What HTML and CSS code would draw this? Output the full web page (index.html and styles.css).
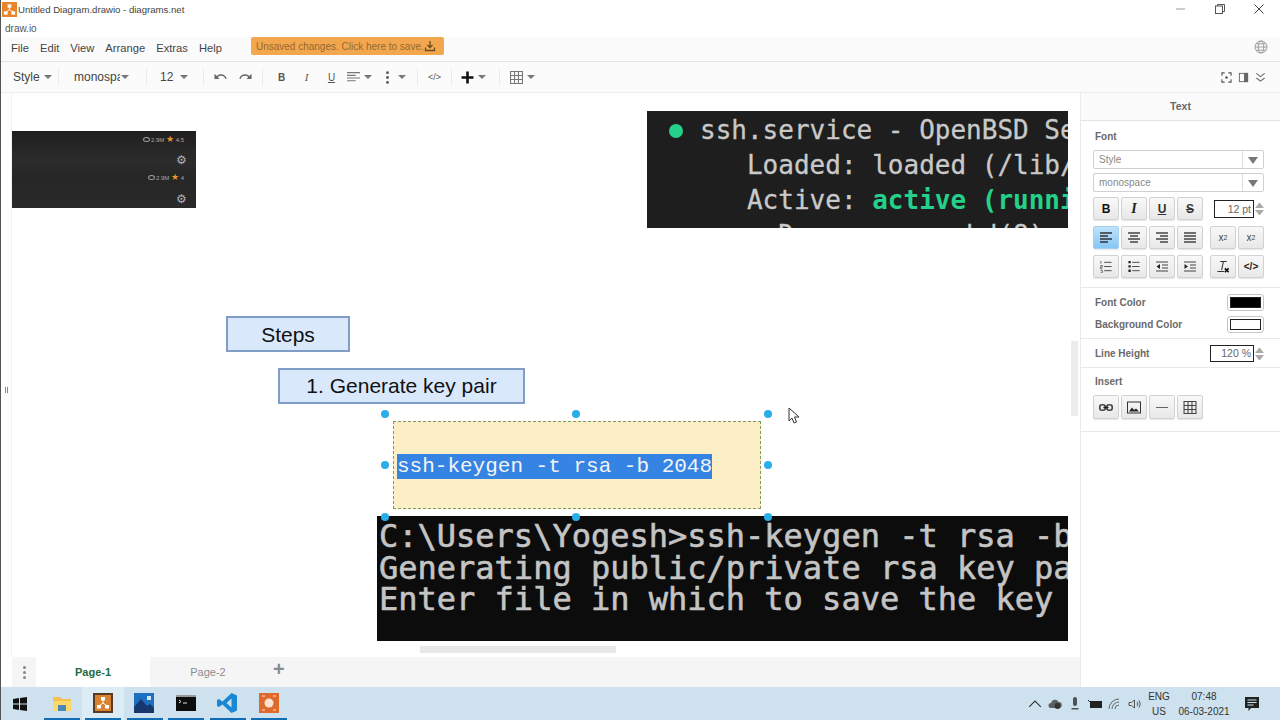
FILE: index.html
```html
<!DOCTYPE html>
<html lang="en">
  <head>
    <meta charset="UTF-8">
    <title>Untitled Diagram.drawio - diagrams.net</title>
    <link rel="stylesheet" href="styles.css">
  </head>
  <body>
    <div class="app">
      <div class="titlebar">
        <svg class="app-icon" viewBox="0 0 16 16">
          <rect width="16" height="16" fill="#e8852c"/>
          <path d="M8 5v3M8 8l-4 3M8 8l4 3" stroke="#fff" stroke-width="1"/>
          <rect x="6" y="2.5" width="4" height="3.5" fill="#fff"/>
          <rect x="2" y="10" width="4" height="3.5" fill="#fff"/>
          <rect x="10" y="10" width="4" height="3.5" fill="#fff"/>
        </svg>
        <span class="title-text">Untitled Diagram.drawio - diagrams.net</span>
        <div class="win-btns">
          <svg viewBox="0 0 12 12"><path d="M1 6h9" stroke="#999" stroke-width="1"/></svg>
          <svg viewBox="0 0 12 12" fill="none" stroke="#555"><rect x="1.5" y="3" width="7" height="7.5"/><path d="M3.5 3V1.5h7v7H8.500"/></svg>
          <svg viewBox="0 0 12 12" stroke="#444"><path d="M1.500 1.500l9 9M10.500 1.500l-9 9"/></svg>
        </div>
      </div>
      <div class="brand">draw.io</div>

      <div class="menubar">
        <span class="menu-item">File</span>
        <span class="menu-item">Edit</span>
        <span class="menu-item">View</span>
        <span class="menu-item">Arrange</span>
        <span class="menu-item">Extras</span>
        <span class="menu-item">Help</span>
        <div class="save-btn">
          <span>Unsaved changes. Click here to save.</span>
          <svg viewBox="0 0 12 12" fill="none" stroke="#6b4a1c" stroke-width="1.300"><path d="M6 1v6M3.500 5L6 7.500 8.500 5M1.500 7.500v3h9v-3"/></svg>
        </div>
        <svg class="globe" viewBox="0 0 14 14" fill="none" stroke="#8a8a8a" stroke-width=".8"><circle cx="7" cy="7" r="6"/><ellipse cx="7" cy="7" rx="2.800" ry="6"/><path d="M1 7h12M2 3.800h10M2 10.200h10"/></svg>
      </div>

      <div class="toolbar">
        <div class="tb-label tb-style">Style<i class="caret"></i></div>
        <i class="tb-sep"></i>
        <div class="tb-label tb-font"><span class="clip">monospa</span><i class="caret caret-tight"></i></div>
        <i class="tb-sep"></i>
        <div class="tb-label tb-size">12<i class="caret caret-wide"></i></div>
        <i class="tb-sep"></i>
        <button class="tb-btn"><svg viewBox="0 0 14 14"><path d="M.5 3v5.500H6L4 6.600C5 5.700 6.300 5.200 7.800 5.200c2 0 3.700 1.200 4.400 3.300l1.500-.5C12.800 5.300 10.500 3.500 7.800 3.500c-1.900 0-3.600.7-4.900 1.900z" fill="#666"/></svg></button>
        <button class="tb-btn"><svg viewBox="0 0 14 14"><path d="M13.500 3v5.500H8l2-1.900C9 5.700 7.700 5.200 6.200 5.200c-2 0-3.700 1.200-4.400 3.300L.3 8c.9-2.700 3.200-4.500 5.900-4.500 1.900 0 3.600.7 4.900 1.900z" fill="#666"/></svg></button>
        <i class="tb-sep"></i>
        <button class="tb-btn tb-b">B</button>
        <button class="tb-btn tb-i">I</button>
        <button class="tb-btn tb-u">U</button>
        <button class="tb-btn tb-menu tb-align"><svg viewBox="0 0 12 12" stroke="#777"><path d="M0 1.500h12M0 4h8M0 6.500h12M0 9h8"/></svg><i class="caret"></i></button>
        <button class="tb-btn tb-menu"><svg viewBox="0 0 12 12" fill="#555"><circle cx="6" cy="1.500" r="1.300"/><circle cx="6" cy="6" r="1.300"/><circle cx="6" cy="10.500" r="1.300"/></svg><i class="caret"></i></button>
        <i class="tb-sep tb-sep-close"></i>
        <button class="tb-btn tb-code">&lt;/&gt;</button>
        <i class="tb-sep"></i>
        <button class="tb-btn tb-menu tb-plus"><svg viewBox="0 0 12 12"><path d="M6 .5v11M.5 6h11" stroke="#111" stroke-width="2.400"/></svg><i class="caret"></i></button>
        <i class="tb-sep"></i>
        <button class="tb-btn tb-menu tb-table"><svg viewBox="0 0 12 12" fill="none" stroke="#777"><path d="M.5.500h11v11H.5zM4.200.500v11M7.800.500v11M.5 4.200h11M.5 7.800h11"/></svg><i class="caret"></i></button>
        <div class="tb-right">
          <svg viewBox="0 0 12 12" fill="none" stroke="#555" stroke-width="1.200"><path d="M1 4V1h3M8 1h3v3M11 8v3H8M4 11H1V8"/><circle cx="6" cy="6" r="1.400" fill="#555" stroke="none"/></svg>
          <svg viewBox="0 0 12 12" fill="none" stroke="#666"><rect x="1.500" y="1.500" width="9" height="9"/><rect x="7" y="1.500" width="3.500" height="9" fill="#666"/></svg>
          <svg viewBox="0 0 12 12" fill="none" stroke="#666" stroke-width="1.200"><path d="M1.500 1.500L6 5l4.500-3.500M1.500 6.500L6 10l4.500-3.500"/></svg>
        </div>
      </div>

      <div class="main">
        <div class="work">
          <div class="work-top">
            <div class="left-rail"><span class="rail-grip"></span></div>
            <div class="canvas">
              <div class="thumb">
                <div class="thumb-row thumb-row-a"><span class="eye"></span>2.9M <b>★</b> 4.5</div>
                <div class="thumb-gear thumb-gear-a">⚙</div>
                <div class="thumb-row thumb-row-b"><span class="eye"></span>2.9M <b>★</b> 4</div>
                <div class="thumb-gear thumb-gear-b">⚙</div>
              </div>

              <div class="shot-service">
                <i class="dot-ok"></i>
                <pre class="service-text">ssh.service - OpenBSD Se
   Loaded: loaded (/lib/
   Active: <b>active (runni</b>
     Docs: man:sshd(8)</pre>
              </div>

              <div class="node node-steps">Steps</div>
              <div class="node node-gen">1. Generate key pair</div>
              <div class="node-edit"><span class="sel-text">ssh-keygen -t rsa -b 2048</span></div>

              <div class="shot-term">
                <pre class="term-text">C:\Users\Yogesh&gt;ssh-keygen -t rsa -b
Generating public/private rsa key pa
Enter file in which to save the key</pre>
              </div>

              <i class="handle h-tl"></i><i class="handle h-tc"></i><i class="handle h-tr"></i>
              <i class="handle h-ml"></i><i class="handle h-mr"></i>
              <i class="handle h-bl"></i><i class="handle h-bc"></i><i class="handle h-br"></i>

              <svg class="pointer" viewBox="0 0 12 18"><path d="M1 1v13l3-3 2 5 2.500-1-2-5h4.500z" fill="#fff" stroke="#333" stroke-width="1"/></svg>
              <i class="scroll-v"></i>
              <i class="scroll-h"></i>
            </div>
          </div>
          <div class="pagebar">
            <div class="page-menu"><i></i><i></i><i></i></div>
            <div class="page-tab active">Page-1</div>
            <div class="page-tab page-tab-next">Page-2</div>
            <div class="page-add">+</div>
          </div>
        </div>

        <aside class="panel">
          <div class="panel-head">Text</div>

          <section class="sec sec-font">
            <div class="sec-title">Font</div>
            <div class="select">Style<span class="select-arrow"></span></div>
            <div class="select">monospace<span class="select-arrow"></span></div>
            <div class="btn-row">
              <div class="btn-group">
                <button class="pbtn pbtn-b">B</button>
                <button class="pbtn pbtn-i">I</button>
                <button class="pbtn pbtn-u">U</button>
                <button class="pbtn pbtn-s">S</button>
              </div>
              <div class="stepper stepper-size"><span class="num">12 pt</span><span class="spin"><i></i><i></i></span></div>
            </div>
            <div class="btn-row">
              <div class="btn-group">
                <button class="pbtn on"><svg viewBox="0 0 14 12" stroke="#333" stroke-width="1.400"><path d="M1 1.500h12M1 4.500h8M1 7.500h12M1 10.500h8"/></svg></button>
                <button class="pbtn"><svg viewBox="0 0 14 12" stroke="#444" stroke-width="1.400"><path d="M1 1.500h12M3 4.500h8M1 7.500h12M3 10.500h8"/></svg></button>
                <button class="pbtn"><svg viewBox="0 0 14 12" stroke="#444" stroke-width="1.400"><path d="M1 1.500h12M5 4.500h8M1 7.500h12M5 10.500h8"/></svg></button>
                <button class="pbtn"><svg viewBox="0 0 14 12" stroke="#444" stroke-width="1.400"><path d="M1 1.500h12M1 4.500h12M1 7.500h12M1 10.500h12"/></svg></button>
              </div>
              <div class="btn-group">
                <button class="pbtn pbtn-script">x<sub>2</sub></button>
                <button class="pbtn pbtn-script">x<sup>2</sup></button>
              </div>
            </div>
            <div class="btn-row">
              <div class="btn-group">
                <button class="pbtn"><svg viewBox="0 0 14 14" stroke="#444"><path d="M5 2.500h8M5 7h8M5 11.500h8"/><path d="M1.500 1v3M1 6h2v1.500H1V9h2M1 11h2v3H1" fill="none" stroke-width=".8"/></svg></button>
                <button class="pbtn"><svg viewBox="0 0 14 14" stroke="#444"><path d="M5 2.500h8M5 7h8M5 11.500h8"/><path d="M1 1h2.500v2.500H1zM1 5.700h2.500v2.500H1zM1 10.300h2.500v2.500H1z" fill="#222" stroke="none"/></svg></button>
                <button class="pbtn"><svg viewBox="0 0 14 12" stroke="#444" stroke-width="1.200"><path d="M1 1.500h12M7 4.500h6M7 7.500h6M1 10.500h12"/><path d="M5 3.500v5L1.500 6z" fill="#222" stroke="none"/></svg></button>
                <button class="pbtn"><svg viewBox="0 0 14 12" stroke="#444" stroke-width="1.200"><path d="M1 1.500h12M7 4.500h6M7 7.500h6M1 10.500h12"/><path d="M1.500 3.500v5L5 6z" fill="#222" stroke="none"/></svg></button>
              </div>
              <div class="btn-group">
                <button class="pbtn"><svg viewBox="0 0 14 14" fill="none" stroke="#333"><path d="M4 1.500h7M7.500 1.500L5.500 11M1 12.500h7" stroke-width="1.100"/><path d="M9 9l4 4M13 9l-4 4" stroke="#111" stroke-width="1.800"/></svg></button>
                <button class="pbtn pbtn-code">&lt;/&gt;</button>
              </div>
            </div>
          </section>

          <section class="sec sec-color">
            <div class="color-row"><span class="sec-title">Font Color</span><span class="swatch"><i class="swatch-black"></i></span></div>
            <div class="color-row"><span class="sec-title">Background Color</span><span class="swatch"><i></i></span></div>
          </section>

          <section class="sec sec-line">
            <span class="sec-title">Line Height</span>
            <div class="stepper stepper-line"><span class="num">120 %</span><span class="spin"><i></i><i></i></span></div>
          </section>

          <section class="sec sec-insert">
            <div class="sec-title">Insert</div>
            <div class="btn-group">
              <button class="pbtn"><svg viewBox="0 0 16 10" fill="none" stroke="#222" stroke-width="1.600"><rect x="1" y="2" width="6" height="6" rx="1.500"/><rect x="9" y="2" width="6" height="6" rx="1.500"/><path d="M5 5h6"/></svg></button>
              <button class="pbtn"><svg viewBox="0 0 14 12"><rect x=".5" y=".5" width="13" height="11" fill="none" stroke="#333"/><path d="M2 10l3-4 2 2.500 2-1.500 3 3z" fill="#222"/></svg></button>
              <button class="pbtn"><svg viewBox="0 0 14 12"><path d="M1 6h12" stroke="#666"/></svg></button>
              <button class="pbtn"><svg viewBox="0 0 12 12" fill="none" stroke="#444"><path d="M.5.500h11v11H.5zM4.200.500v11M7.800.500v11M.5 4.200h11M.5 7.800h11"/></svg></button>
            </div>
          </section>
        </aside>
      </div>

      <div class="taskbar">
        <div class="task-start"><svg viewBox="0 0 14 14" fill="#111"><path d="M0 2l6-.9V6.500H0zM7 1l7-1v6.500H7zM0 7.500h6V13l-6-.9zM7 7.500h7V14l-7-1z"/></svg></div>
        <div class="task-app open"><svg viewBox="0 0 20 18"><path d="M1 3h7l2 2h9v4H1z" fill="#f2c14e"/><rect x="1" y="7" width="18" height="10" fill="#fbd968"/><rect x="6" y="11" width="8" height="6" fill="#4a86b8"/></svg></div>
        <div class="task-app open current"><svg viewBox="0 0 20 20"><rect width="20" height="20" fill="#5a3a22"/><rect x="2" y="2" width="16" height="16" fill="#d9822f"/><path d="M10 7v3M10 10l-4 3M10 10l4 3" stroke="#fff"/><rect x="8" y="4" width="4" height="3.500" fill="#fff"/><rect x="4" y="12" width="4" height="3.500" fill="#fff"/><rect x="12" y="12" width="4" height="3.500" fill="#fff"/></svg></div>
        <div class="task-app open"><svg viewBox="0 0 20 20"><rect width="20" height="20" fill="#1f6fc0"/><path d="M0 20V14L7 6l6 7 3-2 4 4v5z" fill="#17386e"/><rect x="13" y="3" width="4" height="4" fill="#cfe6fa"/></svg></div>
        <div class="task-app open"><svg viewBox="0 0 20 16"><rect width="20" height="16" fill="#0c0c0c"/><rect y="0" width="20" height="2" fill="#9a9a9a"/><path d="M3 5l2 1.500L3 8" stroke="#ddd" fill="none"/><path d="M7 8h4" stroke="#ddd"/></svg></div>
        <div class="task-app open"><svg viewBox="0 0 20 20"><path d="M14.500 0L20 2.500v15L14.500 20 5.500 11.500 2 14 0 13V7l2-1 3.500 2.500zM14.500 5.500L9.500 10l5 4.500z" fill="#1a87d6"/></svg></div>
        <div class="task-app open"><svg viewBox="0 0 20 20"><rect width="20" height="20" fill="#e0692c"/><circle cx="10" cy="10" r="4.500" fill="#fbe3d3"/><path d="M3 3h3M14 3h3M3 17h3M14 17h3" stroke="#fbe3d3"/></svg></div>
        <div class="tray">
          <svg class="tray-icon" viewBox="0 0 12 12" fill="none" stroke="#333"><path d="M1 8.500L6 3.500l5 5"/></svg>
          <svg class="tray-icon" viewBox="0 0 14 12"><path d="M3 10a2.500 2.500 0 0 1 0-5 4 4 0 0 1 7.500-1A3 3 0 0 1 11 10z" fill="#5a5f63"/><circle cx="9.500" cy="8" r="3" fill="#333"/></svg>
          <svg class="tray-icon" viewBox="0 0 12 14"><rect x="4" y="0" width="4" height="9" rx="2" fill="#4d5257"/><path d="M2.500 11h7v1.500h-7z" fill="#4d5257"/></svg>
          <svg class="tray-icon" viewBox="0 0 14 10"><rect x="2" y="2" width="12" height="7" fill="#222"/><path d="M0 1l2 2" stroke="#222"/></svg>
          <svg class="tray-icon" viewBox="0 0 14 12" fill="none" stroke="#666"><path d="M1 11a10 10 0 0 1 10-10M4 11a7 7 0 0 1 7-7M7 11a4 4 0 0 1 4-4"/></svg>
          <svg class="tray-icon" viewBox="0 0 14 12" fill="none" stroke="#555"><path d="M1 4.500h2.500L6.500 2v8L3.500 7.500H1zM9 4a3 3 0 0 1 0 4M11 2.500a6 6 0 0 1 0 7"/></svg>
          <div class="tray-lang"><span>ENG</span><span>US</span></div>
          <div class="tray-clock"><span>07:48</span><span>06-03-2021</span></div>
          <svg class="tray-note" viewBox="0 0 14 14"><path d="M0 0h14v11H6l-2.500 3V11H0z" fill="#222"/><path d="M2.500 3h9M2.500 5.500h9M2.500 8h6" stroke="#cfe3ee"/></svg>
        </div>
      </div>
    </div>
  </body>
</html>
```

FILE: styles.css
```css
* {
  margin: 0;
  padding: 0;
  box-sizing: border-box;
}

html, body {
  width: 1280px;
  height: 720px;
  overflow: hidden;
}

body {
  background: #fff;
  font-family: "Liberation Sans", Arial, sans-serif;
  color: #333;
}

button {
  border: 0;
  background: none;
  font-family: inherit;
  color: inherit;
}

.app {
  width: 1280px;
  height: 720px;
  display: flex;
  flex-direction: column;
  border-left: 1px solid #555;
}

/* window chrome */
.titlebar {
  height: 18px;
  flex: none;
  display: flex;
  align-items: center;
  padding-left: 1px;
}

.app-icon {
  width: 15px;
  height: 15px;
  margin-right: 1px;
}

.title-text {
  font-size: 9.600px;
  color: #444;
}

.win-btns {
  margin-left: auto;
  display: flex;
  gap: 27px;
  padding-right: 15px;
}

.win-btns svg {
  width: 12px;
  height: 12px;
}

.brand {
  height: 19px;
  flex: none;
  font-size: 10px;
  line-height: 21px;
  padding-left: 4px;
  color: #555;
}

.menubar {
  height: 25px;
  flex: none;
  display: flex;
  align-items: flex-start;
  background: #fbfbfb;
  border-bottom: 1px solid #e4e4e4;
  padding-left: 10px;
}

.menu-item {
  font-size: 11.200px;
  line-height: 22px;
  color: #444;
  margin-right: 11px;
}

.save-btn {
  display: flex;
  align-items: center;
  justify-content: space-between;
  height: 18px;
  margin-left: 18px;
  padding: 0 9px 0 5px;
  width: 193px;
  background: #f2a74f;
  border-radius: 2px;
  font-size: 10px;
  color: #95682f;
  white-space: nowrap;
}

.save-btn svg {
  width: 12px;
  height: 12px;
  flex: none;
}

.globe {
  width: 14px;
  height: 14px;
  margin: 3px 12px 0 auto;
}

.toolbar {
  height: 31px;
  flex: none;
  display: flex;
  align-items: center;
  background: #fbfbfb;
  border-bottom: 1px solid #ececec;
  padding-left: 12px;
}

.tb-label {
  display: flex;
  align-items: center;
  flex: none;
  font-size: 12px;
  color: #444;
  white-space: nowrap;
}

.tb-style {
  width: 41px;
}

.tb-font {
  width: 68px;
  margin-left: 11px;
}

.tb-size {
  width: 39px;
  margin-left: 9px;
}

.clip {
  display: block;
  width: 46px;
  overflow: hidden;
}

.caret {
  display: inline-block;
  flex: none;
  width: 0;
  height: 0;
  margin-left: 4px;
  border: 4px solid transparent;
  border-top-color: #777;
  border-bottom: 0;
}

.caret-tight {
  margin-left: 1px;
}

.caret-wide {
  margin-left: 7px;
}

.tb-sep {
  width: 1px;
  height: 18px;
  margin: 0 4px;
  background: #ececec;
  flex: none;
}

.tb-sep-close {
  margin-left: 2px;
}

.tb-btn {
  width: 25px;
  height: 22px;
  flex: none;
  display: flex;
  align-items: center;
  justify-content: center;
}

.tb-btn svg {
  width: 13px;
  height: 13px;
  flex: none;
}

.tb-menu {
  width: 34px;
  justify-content: flex-start;
}

.tb-align {
  margin-left: 3px;
}

.tb-plus {
  margin-left: 5px;
}

.tb-table {
  margin-left: 6px;
}

.tb-b {
  margin-left: 2px;
  font-size: 10px;
  font-weight: bold;
  color: #555;
}

.tb-i {
  font-size: 11px;
  font-style: italic;
  font-family: "Liberation Serif", serif;
  color: #555;
}

.tb-u {
  font-size: 10px;
  color: #555;
  text-decoration: underline;
}

.tb-code {
  font-size: 9px;
  color: #555;
}

.tb-right {
  margin-left: auto;
  display: flex;
  align-items: center;
  gap: 6px;
  padding-right: 14px;
}

.tb-right svg {
  width: 11px;
  height: 11px;
}

/* main area */
.main {
  flex: 1;
  min-height: 0;
  display: flex;
}

.work {
  width: 1079px;
  display: flex;
  flex-direction: column;
}

.work-top {
  flex: 1;
  min-height: 0;
  display: flex;
}

.left-rail {
  width: 11px;
  flex: none;
  display: flex;
  align-items: center;
  justify-content: center;
  background: #fff;
  border-right: 1px solid #f2f2f2;
}

.rail-grip {
  width: 3px;
  height: 6px;
  border-left: 1px solid #888;
  border-right: 1px solid #888;
  margin-top: 30px;
}

.canvas {
  flex: 1;
  position: relative;
  overflow: hidden;
  background: #fff;
}

/* canvas coordinates: x - 12, y - 93 */
.thumb {
  position: absolute;
  left: 0;
  top: 38px;
  width: 184px;
  height: 77px;
  background: linear-gradient(#1f1f1f, #2c2c2c 40%, #262626 60%, #2a2a2a);
  color: #a8a8a8;
  font-size: 6px;
}

.thumb-row {
  position: absolute;
  right: 12px;
  white-space: nowrap;
}

.thumb-row b {
  color: #e3962d;
  font-size: 9px;
  line-height: 8px;
  font-weight: normal;
}

.thumb-row-a {
  top: 4px;
}

.thumb-row-b {
  top: 42px;
}

.eye {
  display: inline-block;
  width: 7px;
  height: 5px;
  margin-right: 1px;
  border: 1px solid #9c9c9c;
  border-radius: 50%;
}

.thumb-gear {
  position: absolute;
  right: 9px;
  font-size: 12px;
  line-height: 12px;
  color: #b0b0b0;
}

.thumb-gear-a {
  top: 23px;
}

.thumb-gear-b {
  top: 62px;
}

.shot-service {
  position: absolute;
  left: 635px;
  top: 18px;
  width: 421px;
  height: 117px;
  overflow: hidden;
  background: #1e1e1e;
  color: #c9c9c9;
}

.dot-ok {
  position: absolute;
  left: 22px;
  top: 13px;
  width: 14px;
  height: 14px;
  border-radius: 50%;
  background: #23d18b;
}

.service-text {
  position: absolute;
  left: 53px;
  top: 2px;
  font-family: "DejaVu Sans Mono", monospace;
  font-size: 26px;
  line-height: 35px;
  -webkit-text-stroke: .3px #c9c9c9;
}

.service-text b {
  color: #23d18b;
  -webkit-text-stroke: 0;
}

.node {
  position: absolute;
  display: flex;
  align-items: center;
  justify-content: center;
  background: #dae8fc;
  border: 2px solid #7f9dc8;
  color: #111;
}

.node-steps {
  left: 214px;
  top: 223px;
  width: 124px;
  height: 36px;
  padding-top: 1px;
  font-size: 21px;
}

.node-gen {
  left: 266px;
  top: 275px;
  width: 247px;
  height: 36px;
  font-size: 21px;
}

.node-edit {
  position: absolute;
  left: 381px;
  top: 328px;
  width: 368px;
  height: 88px;
  display: flex;
  align-items: center;
  padding: 3px 0 0 3px;
  background: #fcefc5;
  border: 1px dashed #7f9a63;
}

.sel-text {
  font-family: "Liberation Mono", monospace;
  font-size: 21px;
  line-height: 25px;
  background: #3584e4;
  color: #f4f4f4;
  white-space: pre;
}

.shot-term {
  position: absolute;
  left: 365px;
  top: 423px;
  width: 691px;
  height: 125px;
  overflow: hidden;
  background: #0c0c0c;
}

.term-text {
  padding: 5px 0 0 2px;
  font-family: "DejaVu Sans Mono", monospace;
  font-size: 32px;
  line-height: 31.500px;
  color: #c4c4c4;
  -webkit-text-stroke: .6px #c4c4c4;
}

.handle {
  position: absolute;
  width: 8px;
  height: 8px;
  border-radius: 50%;
  background: #29aeea;
}

.h-tl { left: 369px; top: 317px; }
.h-tc { left: 560px; top: 317px; }
.h-tr { left: 752px; top: 317px; }
.h-ml { left: 369px; top: 368px; }
.h-mr { left: 752px; top: 368px; }
.h-bl { left: 369px; top: 420px; }
.h-bc { left: 560px; top: 420px; }
.h-br { left: 752px; top: 420px; }

.pointer {
  position: absolute;
  left: 776px;
  top: 314px;
  width: 12px;
  height: 18px;
}

.scroll-v {
  position: absolute;
  left: 1059px;
  top: 248px;
  width: 7px;
  height: 75px;
  background: #ececec;
}

.scroll-h {
  position: absolute;
  left: 408px;
  top: 553px;
  width: 196px;
  height: 7px;
  background: #e8e8e8;
}

/* page tabs */
.pagebar {
  height: 30px;
  flex: none;
  display: flex;
  align-items: stretch;
  margin-left: 11px;
  background: #f5f5f5;
  font-size: 11px;
  color: #8c8c8c;
}

.page-menu {
  width: 24px;
  display: flex;
  flex-direction: column;
  align-items: center;
  justify-content: center;
  gap: 2px;
}

.page-menu i {
  width: 3px;
  height: 3px;
  border-radius: 50%;
  background: #888;
}

.page-tab {
  width: 114px;
  line-height: 30px;
  text-align: center;
}

.page-tab-next {
  padding-left: 2px;
}

.page-tab.active {
  background: #fff;
  color: #1d6b40;
  font-weight: bold;
}

.page-add {
  margin-left: 9px;
  font-size: 20px;
  font-weight: bold;
  line-height: 24px;
  color: #8c8c8c;
}

/* right panel */
.panel {
  flex: 1;
  background: #fff;
  border-left: 1px solid #eaeaea;
  font-size: 10px;
  color: #555;
}

.panel-head {
  height: 28px;
  line-height: 26px;
  text-align: center;
  font-weight: bold;
  font-size: 10.500px;
  color: #666;
  background: #fbfbfb;
  border-bottom: 1px solid #e4e4e4;
}

.sec {
  padding: 0 16px 0 12px;
  border-bottom: 1px solid #e9e9e9;
}

.sec-title {
  display: block;
  padding-left: 2px;
  font-size: 10px;
  line-height: 12px;
  font-weight: bold;
  color: #6a6a6a;
}

.sec-font {
  height: 167px;
  padding-top: 10px;
}

.select {
  position: relative;
  height: 19px;
  margin-top: 7px;
  margin-bottom: -1px;
  padding-left: 5px;
  line-height: 17px;
  color: #888;
  background: #fff;
  border: 1px solid #d0d0d0;
  border-radius: 2px;
}

.select + .select {
  margin-top: 5px;
}

.select-arrow {
  position: absolute;
  right: 5px;
  top: 6px;
  border: 5px solid transparent;
  border-top: 7px solid #777;
  border-bottom: 0;
}

.select-arrow::before {
  content: "";
  position: absolute;
  left: -11px;
  top: -13px;
  height: 17px;
  border-left: 1px solid #ddd;
}

.btn-row {
  display: flex;
  justify-content: space-between;
  align-items: center;
  margin-top: 6px;
}

.btn-group {
  display: flex;
  gap: 2px;
}

.pbtn {
  width: 26px;
  height: 23px;
  display: flex;
  align-items: center;
  justify-content: center;
  background: linear-gradient(#f8f8f8, #e8e8e8);
  border: 1px solid #d2d2d2;
  border-radius: 2px;
  box-shadow: 0 1px 1px #e6e6e6;
  font-size: 11px;
}

.pbtn svg {
  width: 14px;
  height: 13px;
}

.pbtn.on {
  background: linear-gradient(#bfe2fb, #86c6f5);
  border-color: #a8cfee;
}

.pbtn-b {
  font-weight: bold;
  font-size: 12px;
  color: #111;
}

.pbtn-i {
  font-style: italic;
  font-weight: bold;
  font-family: "Liberation Serif", serif;
  font-size: 14px;
  color: #222;
}

.pbtn-u {
  font-weight: bold;
  font-size: 12px;
  text-decoration: underline;
  color: #333;
}

.pbtn-s {
  font-weight: bold;
  font-size: 12px;
  text-decoration: line-through;
  color: #333;
}

.pbtn-script {
  font-size: 10px;
  color: #444;
}

.pbtn-script sub, .pbtn-script sup {
  font-size: 7px;
  line-height: 0;
}

.pbtn-code {
  font-size: 10px;
  font-weight: bold;
  color: #222;
}

.stepper {
  display: flex;
  align-items: center;
  gap: 1px;
}

.num {
  display: block;
  height: 18px;
  line-height: 16px;
  padding-right: 2px;
  text-align: right;
  font-size: 10.500px;
  background: #fff;
  border: 1px solid #222;
  color: #666;
}

.stepper-size .num {
  width: 40px;
}

.stepper-line .num {
  width: 44px;
  height: 17px;
  line-height: 15px;
}

.spin {
  display: flex;
  flex-direction: column;
  gap: 2px;
  width: 9px;
}

.spin i {
  border: 4px solid transparent;
  border-top: 0;
  border-bottom: 5px solid #aaa;
}

.spin i + i {
  transform: scaleY(-1);
}

.sec-color {
  height: 51px;
  padding-top: 6px;
}

.color-row {
  display: flex;
  justify-content: space-between;
  align-items: center;
  height: 17px;
  margin-bottom: 5px;
}

.swatch {
  display: block;
  width: 37px;
  height: 17px;
  padding: 2px;
  border: 1px solid #c6c6c6;
  border-radius: 3px;
}

.swatch i {
  display: block;
  height: 100%;
  background: #fff;
  border: 1px solid #222;
}

.swatch .swatch-black {
  background: #000;
}

.sec-line {
  height: 29px;
  padding-top: 1px;
  display: flex;
  align-items: center;
  justify-content: space-between;
}

.sec-insert {
  height: 64px;
  padding-top: 8px;
}

.sec-insert .btn-group {
  margin-top: 7px;
}

.sec-insert .pbtn {
  height: 24px;
}

/* windows taskbar */
.taskbar {
  height: 33px;
  flex: none;
  display: flex;
  background: #cde2ee;
}

.task-start {
  width: 40px;
  display: flex;
  align-items: center;
  justify-content: center;
  padding-right: 2px;
}

.task-start svg {
  width: 14px;
  height: 14px;
}

.task-app {
  width: 41.400px;
  display: flex;
  align-items: center;
  justify-content: center;
  border-bottom: 2px solid transparent;
}

.task-app svg {
  width: 20px;
  height: 20px;
}

.task-app.open {
  border-image: linear-gradient(to right, transparent 4px, #0f6cb5 4px, #0f6cb5 38px, transparent 38px) 1;
}

.task-app.current {
  background: #dcecf5;
}

.tray {
  margin-left: auto;
  display: flex;
  align-items: center;
  padding-right: 21px;
  color: #333;
  font-size: 10px;
}

.tray-icon {
  width: 14px;
  height: 14px;
  margin-right: 6px;
}

.tray-lang, .tray-clock {
  display: flex;
  flex-direction: column;
  align-items: center;
  line-height: 15px;
}

.tray-lang {
  margin-left: -1px;
  width: 24px;
}

.tray-clock {
  width: 60px;
  margin-left: 3px;
}

.tray-note {
  width: 14px;
  height: 14px;
  margin-left: 11px;
}
```
